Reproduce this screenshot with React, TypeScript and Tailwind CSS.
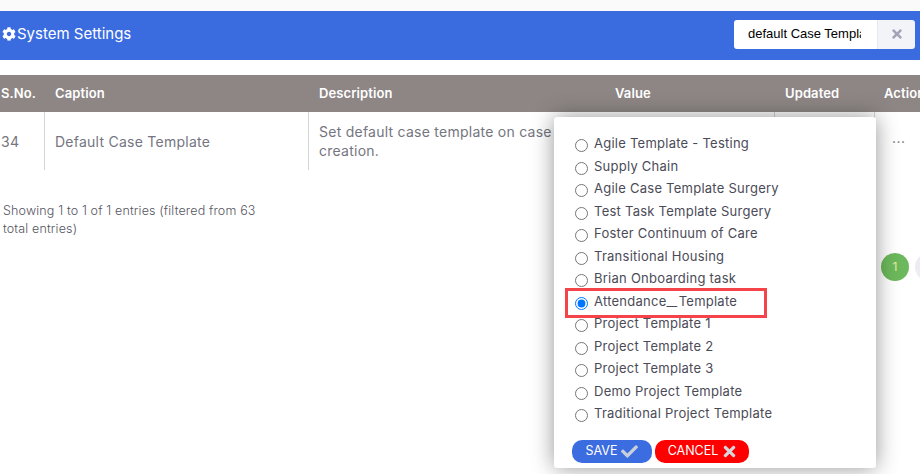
import { FaCheck, FaCog, FaTimes } from 'react-icons/fa';

const templates = [
  'Agile Template - Testing',
  'Supply Chain',
  'Agile Case Template Surgery',
  'Test Task Template Surgery',
  'Foster Continuum of Care',
  'Transitional Housing',
  'Brian Onboarding task',
  'Attendance_Template',
  'Project Template 1',
  'Project Template 2',
  'Project Template 3',
  'Demo Project Template',
  'Traditional Project Template',
];

function TemplatePopup() {
  return (
    <div className="absolute left-[554px] top-[117px] w-[322px] h-[351px] bg-white rounded-[3px] shadow-[0_0_22px_rgba(0,0,0,0.42)] pt-[15px] pl-[21px]">
      {templates.map((name) => (
        <label key={name} className="flex items-start h-[22.5px] text-[13px] leading-[22px] text-[#4b4b57] tracking-[0.25px]">
          <input
            type="radio"
            name="template"
            readOnly
            defaultChecked={name === 'Attendance_Template'}
            className="w-[13px] h-[13px] m-0 mt-[7px] mr-[6px] shrink-0"
          />
          {name === 'Attendance_Template' ? (
            <span>
              Attendance<span className="inline-block mx-[3px] scale-x-[1.8]">_</span>Template
            </span>
          ) : (
            name
          )}
        </label>
      ))}
      {/* red highlight round the selected row */}
      <div className="absolute left-[11px] top-[171px] w-[202px] h-[30px] border-[3px] border-[#f4444a]" />
      <div className="flex gap-[3px] mt-[15px] -ml-[3px] text-[12.5px] text-white">
        <button className="flex items-center justify-center gap-[4px] w-[80px] h-[23px] pt-[1px] rounded-[10px] bg-[#3b6ce0]">
          SAVE <FaCheck className="text-[#c9cfdc] text-[17px]" />
        </button>
        <button className="flex items-center justify-center gap-[3px] pl-[2px] w-[94px] h-[23px] pt-[1px] rounded-[10px] bg-[#ff0000]">
          CANCEL <FaTimes className="text-[#d6d6dc] text-[17px]" />
        </button>
      </div>
    </div>
  );
}

export default function App() {
  return (
    <div className="relative w-[920px] h-[474px] overflow-hidden bg-white font-['Inter',sans-serif]">
      <div className="h-[11px] bg-[#fafafa]" />

      {/* Title bar */}
      <div className="flex items-center justify-between h-[49px] pl-[2px] pr-[5px] bg-[#3a6ce0]">
        <div className="flex items-center gap-[1px] -mt-[3px] text-[15px] text-white">
          <FaCog className="text-[14px]" />
          System Settings
        </div>
        <div className="flex h-[29px] w-[181px] -mt-[3px] rounded-[3px] overflow-hidden">
          <input
            readOnly
            value="default Case Template"
            className="w-[143px] pl-[14px] pr-[16px] bg-white text-[13px] text-black font-['Liberation_Sans',sans-serif] outline-none"
          />
          <div className="flex flex-1 items-center justify-center bg-[#f2f4f8] border-l border-[#e6e8ef]">
            <FaTimes className="text-[#a3a3b8] text-[14px]" />
          </div>
        </div>
      </div>

      {/* Table */}
      <div className="mt-[15px] flex h-[37px] items-center bg-[#8d8685] text-[13px] font-semibold tracking-[0.1px] text-white">
        <div className="w-[45px] shrink-0 pl-[1px]">S.No.</div>
        <div className="w-[264px] shrink-0 pl-[10px]">Caption</div>
        <div className="w-[296px] shrink-0 pl-[10px]">Description</div>
        <div className="w-[170px] shrink-0 pl-[10px]">Value</div>
        <div className="w-[100px] shrink-0 pl-[10px]">Updated</div>
        <div className="shrink-0 pl-[9px]">Action</div>
      </div>
      <div className="flex h-[58px] text-[14px] tracking-[0.25px] text-[#75757f]">
        <div className="flex items-center w-[45px] pl-[1px] border-r border-[#d4d4d4]">34</div>
        <div className="flex items-center w-[264px] pl-[10px] border-r border-[#d4d4d4]">Default Case Template</div>
        <div className="w-[296px] pl-[10px] pr-[40px] pt-[10px] leading-[19px]">
          Set default case template on case creation.
        </div>
        <div className="w-[170px] border-r border-[#d4d4d4]" />
        <div className="w-[100px] border-r border-[#d4d4d4]" />
        <div className="pl-[17px] pt-[16px] leading-[20px] tracking-[0.5px]">...</div>
      </div>

      {/* Footer */}
      <div className="flex items-start justify-between">
        <div className="w-[280px] pl-[3px] pt-[32px] text-[12.5px] font-light leading-[18px] tracking-[0.15px] text-[#55555f]">
          Showing 1 to 1 of 1 entries (filtered from 63 total entries)
        </div>
        <div className="flex gap-[6px] pt-[83px] -mr-[23px] text-[12px]">
          <div className="flex items-center justify-center w-[28px] h-[28px] rounded-full bg-[#6cb85c] text-[#e9e9a0]">1</div>
          <div className="w-[28px] h-[28px] rounded-full bg-[#ececf2]" />
        </div>
      </div>

      <TemplatePopup />
    </div>
  );
}
